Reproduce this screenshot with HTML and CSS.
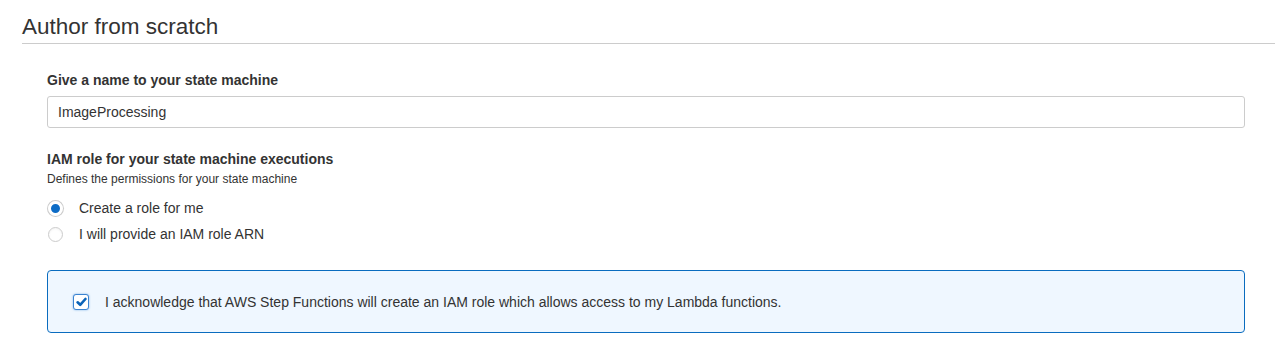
FILE: index.html
```html
<!DOCTYPE html>
<html lang="en">
<head>
  <meta charset="UTF-8" />
  <title>Author from scratch</title>
  <link rel="stylesheet" href="styles.css">
</head>
<body>
  <section class="panel">
    <h2 class="panel-title">Author from scratch</h2>

    <div class="form-body">
      <!-- Name -->
      <div class="field">
        <label class="field-label" for="smName">Give a name to your state machine</label>
        <input class="text-input" id="smName" type="text" value="ImageProcessing">
      </div>

      <!-- Role -->
      <div class="field">
        <div class="field-label">IAM role for your state machine executions</div>
        <div class="field-desc">Defines the permissions for your state machine</div>
        <div class="radio-list">
          <label class="radio-row">
            <span class="radio checked"></span>
            Create a role for me
          </label>
          <label class="radio-row">
            <span class="radio"></span>
            I will provide an IAM role ARN
          </label>
        </div>
      </div>

      <div class="notice">
        <span class="checkbox">
          <svg width="11" height="10" viewBox="0 0 11 10">
            <path d="M1.6 5.3 L4.2 7.8 L9.4 2" fill="none" stroke="#0a63b8" stroke-width="2.6" stroke-linecap="round" stroke-linejoin="round"/>
          </svg>
        </span>
        <span>I acknowledge that AWS Step Functions will create an IAM role which allows access to my Lambda functions.</span>
      </div>
    </div>
  </section>
</body>
</html>
```

FILE: styles.css
```css
body {
  margin: 0;
  font-family: 'Liberation Sans', Arial, Helvetica, sans-serif;
  color: #333;
  background-color: #fff;
}
.panel {
  padding: 12px 0 0 22px;
}
.panel-title {
  margin: 0;
  font-size: 22.5px;
  font-weight: normal;
  line-height: 30px;
  padding-bottom: 1px;
  border-bottom: 1px solid #ccc;
  color: #333;
}
.form-body {
  padding: 28px 30px 0 25px;
}
.field {
  margin-bottom: 23px;
}
.field-label {
  display: block;
  font-size: 14px;
  font-weight: bold;
  line-height: 17px;
  color: #333;
}
.text-input {
  display: block;
  box-sizing: border-box;
  width: 100%;
  height: 32px;
  margin-top: 7px;
  padding: 0 10px;
  border: 1px solid #ccc;
  border-radius: 3px;
  font-family: inherit;
  font-size: 14px;
  color: #333;
}
.field-desc {
  font-size: 12px;
  line-height: 16px;
  margin-top: 3px;
  color: #333;
}
.radio-list {
  margin-top: 8px;
}
.radio-row {
  display: flex;
  align-items: center;
  gap: 16px;
  height: 26px;
  font-size: 14px;
  color: #333;
}
.radio {
  box-sizing: border-box;
  width: 15px;
  height: 15px;
  margin-left: 1px;
  border: 1px solid #ccc;
  border-radius: 50%;
  background: #fff;
  box-shadow: inset 0 1px 2px rgba(0, 0, 0, 0.05);
}
.radio.checked {
  border: 3px solid #fff;
  background: #0d6cc6;
  box-shadow: 0 0 0 1px #ccc;
}
.notice {
  display: flex;
  align-items: center;
  gap: 16px;
  height: 63px;
  box-sizing: border-box;
  padding: 0 25px;
  border: 1px solid #0a6cbf;
  border-radius: 4px;
  background-color: #eff7ff;
  font-size: 14px;
  color: #333;
}
.checkbox {
  box-sizing: border-box;
  width: 16px;
  height: 16px;
  display: flex;
  align-items: center;
  justify-content: center;
  border: 1px solid #3b83d0;
  border-radius: 3px;
  background: #fff;
  box-shadow: 0 0 2px rgba(30, 120, 210, 0.6);
}
```
